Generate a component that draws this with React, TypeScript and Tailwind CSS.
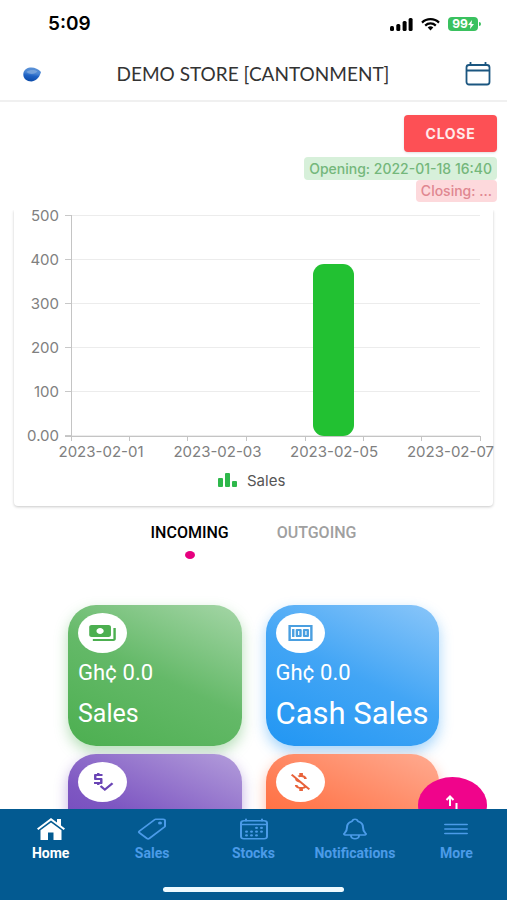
import React from 'react';
import clsx from 'clsx';
import type { IconType } from 'react-icons';
import { IoCalendarOutline, IoMenuOutline, IoNotificationsOutline, IoPricetagOutline } from 'react-icons/io5';
import { MdMoney, MdMoneyOff, MdPayments, MdPriceCheck } from 'react-icons/md';

interface StatCard {
  id: string;
  label?: string;
  amount?: string;
  icon: IconType;
  cardClass: string;
  iconClass: string;
  labelClass?: string;
}

const cards: StatCard[] = [
  {
    id: 'sales',
    label: 'Sales',
    amount: 'Gh¢ 0.0',
    icon: MdPayments,
    cardClass: 'from-[#4caf50] via-[#64b968] to-[#a5d6a7] shadow-[0_6px_14px_rgba(76,175,80,0.4)]',
    iconClass: 'text-[#4caf50]',
    labelClass: 'text-[25px]',
  },
  {
    id: 'cash',
    label: 'Cash Sales',
    amount: 'Gh¢ 0.0',
    icon: MdMoney,
    cardClass: 'from-[#2196f3] via-[#42a5f5] to-[#8ac6f9] shadow-[0_6px_14px_rgba(33,150,243,0.4)]',
    iconClass: 'text-[#4a9fe0]',
    labelClass: 'text-[31px]',
  },
  {
    id: 'credit',
    icon: MdPriceCheck,
    cardClass: 'from-[#673ab7] via-[#7e57c2] to-[#b39ddb] shadow-[0_6px_14px_rgba(103,58,183,0.4)]',
    iconClass: 'text-[#6a45b5]',
  },
  {
    id: 'expenses',
    icon: MdMoneyOff,
    cardClass: 'from-[#ff5722] via-[#ff7a50] to-[#ffab91] shadow-[0_6px_14px_rgba(255,87,34,0.4)]',
    iconClass: 'text-[#e8623a]',
  },
];

const HomeIcon: React.FC = () => (
  <svg viewBox="0 0 28 22" className="h-6 w-8 py-px px-0.5" fill="currentColor">
    <path d="M14 0 0 10.600l1.300 1.500L14 2.600l12.700 9.500 1.300-1.500-4-3V1h-4v3.600z" />
    <path d="M14 4.400 3.500 12.300V22H11v-7.500h5.500V22h8v-9.700z" />
  </svg>
);

const StatusBar: React.FC = () => (
  <div className="flex h-12 items-center justify-between pr-[26px] pl-12">
    <span className="text-[19px] font-semibold text-black">5:09</span>
    <div className="flex items-center gap-2">
      <svg viewBox="0 0 23 13" className="h-[13px] w-[23px]" fill="#000">
        <rect x="0" y="8" width="4" height="5" rx="1.5" />
        <rect x="6.3" y="6" width="4" height="7" rx="1.5" />
        <rect x="12.6" y="3" width="4" height="10" rx="1.5" />
        <rect x="18.6" y="0" width="4" height="13" rx="1.5" />
      </svg>
      <svg viewBox="0 0 19 13" className="h-[13px] w-[19px]" fill="none" stroke="#000" strokeWidth="2.2">
        <path d="M1 4.600C5.600 0 13.400 0 18 4.600" />
        <path d="M4.200 7.600c3-2.900 7.600-2.900 10.600 0" />
        <path d="M6.700 9.400c1.600-1.400 4-1.400 5.600 0L9.500 12.400z" fill="#000" stroke="none" />
      </svg>
      <div className="flex items-center gap-px">
        <div className="flex h-[14px] w-[30px] items-center justify-center rounded bg-[#3ac15f] text-xs font-bold text-white">
          99
          <svg viewBox="0 0 6 9" className="h-[9px] w-1.5" fill="currentColor">
            <path d="M4 0 0 5h2.500L2 9l4-5H3.500z" />
          </svg>
        </div>
        <div className="h-1 w-0.5 rounded-r bg-[#3ac15f]" />
      </div>
    </div>
  </div>
);

const Header: React.FC = () => (
  <header className="flex h-[54px] items-center justify-between border-b-2 border-[#f0f0f0] pr-4 pl-[23px]">
    <svg viewBox="0 0 18 15" className="h-[15px] w-[18px]">
      <defs>
        <linearGradient id="logo" x1="0.6" y1="0" x2="0.4" y2="1">
          <stop offset="0" stopColor="#5c92d6" />
          <stop offset="0.4" stopColor="#4a86d4" />
          <stop offset="0.6" stopColor="#1f62c4" />
          <stop offset="1" stopColor="#0b4aa8" />
        </linearGradient>
      </defs>
      <path d="M7 .5C11 0 15 1.500 18 5 17 9 14 14 8.500 14.500 3.500 14.500.3 11.500.3 7.500.3 3.500 3 1 7 .5z" fill="url(#logo)" />
      <path d="M3.500 5c3-2.500 8-2.500 11-.5-2.500 2.800-8 3.500-11 .5z" fill="#8fb2df" opacity="0.6" />
    </svg>
    <h1 className="font-[Lato,sans-serif] text-[19px] text-[#333]">DEMO STORE [CANTONMENT]</h1>
    <button type="button" aria-label="Pick date" className="text-[#1b5680]">
      <svg viewBox="0 0 26 24" className="h-6 w-[26px]" fill="none" stroke="currentColor" strokeWidth="1.8">
        <rect x="1.500" y="3" width="23" height="19.500" rx="2.500" />
        <path d="M1.500 8.500h23M5.500 0v3.500M20.500 0v3.500" />
      </svg>
    </button>
  </header>
);

const yLabels = ['500', '400', '300', '200', '100', '0.00'];
const xLabels = ['2023-02-01', '2023-02-03', '2023-02-05', '2023-02-07'];
const xTicks = [57, 115, 173, 232, 291, 349, 407, 466];

const SalesChart: React.FC = () => (
  <section className="mx-[14px] mt-2 rounded-b bg-white shadow-[0_1px_3px_rgba(0,0,0,0.22)] [clip-path:inset(0_-4px_-4px_-4px)]">
    <svg viewBox="0 0 479 296" className="block w-full overflow-visible" fontSize="15" fill="#808080">
      {yLabels.map((label, i) => (
        <g key={label}>
          <line x1="57" x2="466" y1={5.5 + i * 44} y2={5.5 + i * 44} stroke="#ececec" />
          <line x1="51" x2="57" y1={5.5 + i * 44} y2={5.5 + i * 44} stroke="#c8c8c8" />
          <text x="45" y={10.5 + i * 44} textAnchor="end">{label}</text>
        </g>
      ))}
      <path d="M57.500 5v221M51 226.500h415" fill="none" stroke="#c4c4c4" />
      {xTicks.map((x) => (
        <line key={x} x1={x + 0.5} x2={x + 0.5} y1="226" y2="231" stroke="#c4c4c4" />
      ))}
      {xLabels.map((label, i) => (
        <text key={label} x={87 + i * 116.5} y="247" textAnchor="middle">{label}</text>
      ))}
      <rect x="299" y="54" width="41" height="172" rx="11" fill="#22c132" />
      <g fill="#2eb84b">
        <rect x="204" y="268" width="5" height="9" rx="1" />
        <rect x="211" y="263" width="5" height="14" rx="1" />
        <rect x="218" y="271" width="5" height="6" rx="1" />
      </g>
      <text x="233" y="276" fill="#555">Sales</text>
    </svg>
  </section>
);

const Card: React.FC<{ item: StatCard }> = ({ item }) => {
  const Icon = item.icon;
  return (
    <article className={clsx('h-[141px] rounded-[28px] bg-linear-[25deg] px-2.5 pt-2 text-white', item.cardClass)}>
      <div className="flex h-10 w-[49px] items-center justify-center rounded-[50%] bg-white">
        <Icon className={clsx('h-6 w-[29px]', item.iconClass)} preserveAspectRatio="none" />
      </div>
      {item.amount && <p className="mt-2 text-[22px] leading-6">{item.amount}</p>}
      {item.label && <p className={clsx('mt-[11px] leading-9 whitespace-nowrap', item.labelClass)}>{item.label}</p>}
    </article>
  );
};

const NavItem: React.FC<{ label: string; active?: boolean; children: React.ReactNode }> = ({ label, active, children }) => (
  <a
    href="#"
    className={clsx(
      'flex flex-1 flex-col items-center gap-0.5 pt-2 text-sm leading-5 font-bold',
      active ? 'text-white' : 'text-[#4b9be8]'
    )}
  >
    {children}
    {label}
  </a>
);

export default function App() {
  return (
    <div className="flex h-screen flex-col overflow-hidden bg-white font-[Inter,sans-serif]">
      <StatusBar />
      <Header />

      <main className="relative min-h-0 flex-1 overflow-hidden">
        <div className="flex flex-col items-end px-2.5 pt-[13px] text-sm font-medium">
          <button type="button" className="mb-[5px] h-[37px] w-[93px] rounded bg-[#fd5055] font-bold tracking-wider text-[#ffeaea] shadow-sm">
            CLOSE
          </button>
          <span className="rounded bg-[#d7f0da] px-[5px] leading-[23px] text-[#74b77b]">Opening: 2022-01-18 16:40</span>
          <span className="rounded bg-[#fdd9dc] px-[5px] leading-[22px] text-[#e08790]">Closing: ...</span>
        </div>

        <SalesChart />

        <div className="flex items-start justify-center gap-12 pt-[17px] font-[Roboto,sans-serif] text-base leading-5 font-medium">
          <button type="button" className="flex flex-col items-center gap-2 text-black">
            INCOMING
            <span className="h-2 w-2.5 rounded-[50%] bg-[#e6007e]" />
          </button>
          <button type="button" className="text-[#a0a0a0]">OUTGOING</button>
        </div>

        <div className="mt-[46px] grid grid-cols-2 gap-x-6 gap-y-2 px-17 font-[Roboto,sans-serif]">
          {cards.map((item) => (
            <Card key={item.id} item={item} />
          ))}
        </div>

        <button
          type="button"
          aria-label="New transaction"
          className="absolute right-5 -bottom-6 flex h-14 w-[69px] justify-center rounded-[50%] bg-[#f0048b] pt-[18px] text-white"
        >
          <svg viewBox="0 0 16 20" className="h-5 w-4" fill="none" stroke="currentColor" strokeWidth="2">
            <path d="M5 11V2M1.500 5 5 1.500 8.500 5M11.500 8v10M8 15l3.500 3.500L15 15" />
          </svg>
        </button>
      </main>

      <nav className="bg-[#035a91] pb-2 font-[Roboto,sans-serif]">
        <div className="flex">
          <NavItem label="Home" active>
            <HomeIcon />
          </NavItem>
          <NavItem label="Sales">
            <IoPricetagOutline className="h-6 w-8" preserveAspectRatio="none" />
          </NavItem>
          <NavItem label="Stocks">
            <IoCalendarOutline className="h-6 w-8" preserveAspectRatio="none" />
          </NavItem>
          <NavItem label="Notifications">
            <IoNotificationsOutline className="h-6 w-8" preserveAspectRatio="none" />
          </NavItem>
          <NavItem label="More">
            <IoMenuOutline className="h-6 w-8" preserveAspectRatio="none" />
          </NavItem>
        </div>
        <div className="mx-auto mt-6 h-[5px] w-[181px] rounded-full bg-[#eefaff]" />
      </nav>
    </div>
  );
}
